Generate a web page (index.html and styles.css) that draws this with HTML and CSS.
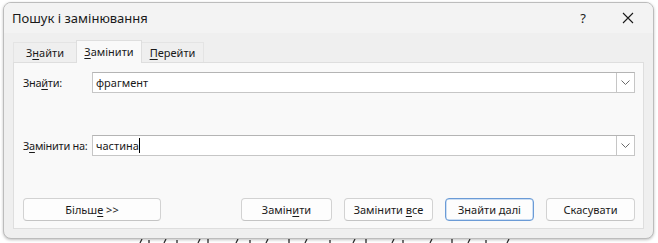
FILE: index.html
```html
<!DOCTYPE html>
<html lang="uk">
<head>
<meta charset="utf-8">
<link rel="stylesheet" href="styles.css">
</head>
<body>
<div class="dialog">
  <div class="titlebar">
    <span class="title">Пошук і замінювання</span>
    <span class="help">?</span>
    <span class="close">
      <svg width="12" height="12" viewBox="0 0 12 12"><path d="M1 1L11 11M11 1L1 11" stroke="#1a1a1a" stroke-width="1.1" fill="none"/></svg>
    </span>
  </div>
  <div class="content">
    <div class="tabs">
      <div class="tab tab-find"><span>З<u>н</u>айти</span></div>
      <div class="tab tab-active"><span><u>З</u>амінити</span></div>
      <div class="tab tab-goto"><span><u>П</u>ерейти</span></div>
    </div>
    <div class="panel">
      <div class="row">
        <label class="label">Зна<u>й</u>ти:</label>
        <div class="combo">
          <span class="value"><span>фрагмент</span></span>
          <span class="drop"><svg width="9" height="5" viewBox="0 0 9 5"><path d="M0.5 0.5L4.5 4.5L8.5 0.5" stroke="#6a6a6a" stroke-width="1" fill="none"/></svg></span>
        </div>
      </div>
      <div class="row row-replace">
        <label class="label">З<u>а</u>мінити на:</label>
        <div class="combo">
          <span class="value"><span>частина</span><span class="caret"></span></span>
          <span class="drop"><svg width="9" height="5" viewBox="0 0 9 5"><path d="M0.5 0.5L4.5 4.5L8.5 0.5" stroke="#6a6a6a" stroke-width="1" fill="none"/></svg></span>
        </div>
      </div>
      <div class="buttons">
        <button class="btn btn-more"><span>Більш<u>е</u> &gt;&gt;</span></button>
        <div class="btn-group">
          <button class="btn btn-w91"><span>Замін<u>и</u>ти</span></button>
          <button class="btn"><span>Замінити <u>в</u>се</span></button>
          <button class="btn btn-default"><span>Знайти далі</span></button>
          <button class="btn"><span>Скасувати</span></button>
        </div>
      </div>
    </div>
  </div>
</div>
<div class="behind">
  <svg width="380" height="5" viewBox="0 0 380 5">
    <g stroke="#2a2a2a" stroke-width="1.3" fill="none">
      <path d="M3 5L5 1"/><path d="M12 5L12 2"/><path d="M27 5L29 1"/><path d="M40 5L40 2"/>
      <path d="M61 5L63 1"/><path d="M71 5L71 1"/><path d="M99 5L101 1"/><path d="M113 5L113 2"/>
      <path d="M129 5L131 1"/><path d="M152 5L152 1"/><path d="M168 5L170 1"/><path d="M193 5L193 2"/>
      <path d="M216 5L218 1"/><path d="M229 5L229 1"/><path d="M255 5L257 1"/><path d="M266 5L266 2"/>
      <path d="M293 5L295 1"/><path d="M315 5L315 1"/><path d="M331 5L333 1"/><path d="M349 5L349 2"/>
      <path d="M370 5L372 1"/>
    </g>
  </svg>
</div>
</body>
</html>
```

FILE: styles.css
```css
* { box-sizing: border-box; }
html, body { margin: 0; padding: 0; background: #ffffff; }
body {
  font-family: "Noto Sans", "Open Sans", sans-serif;
  font-size: 11px;
  color: #1a1a1a;
  width: 658px;
  height: 243px;
  overflow: hidden;
}
u { text-decoration: underline; text-underline-offset: 2px; text-decoration-thickness: 1px; }

.dialog {
  margin: 2px 0 0 3px;
  width: 651px;
  height: 237px;
  border: 1px solid #bcbcbc;
  border-radius: 8px;
  background: #efefef;
  box-shadow: 0 1px 3px rgba(0,0,0,0.25);
  overflow: hidden;
  display: flex;
  flex-direction: column;
  position: relative;
  z-index: 1;
}

.titlebar {
  height: 30px;
  flex: none;
  background: #f3f3f3;
  display: flex;
  align-items: center;
  padding-left: 8px;
}
.title { font-size: 13px; color: #1a1a1a; flex: 1; margin-top: -1px; }
.help { font-size: 13px; width: 12px; text-align: center; margin-right: 33px; color: #1a1a1a; }
.close { width: 12px; height: 12px; display: flex; margin-right: 19px; }

.content {
  flex: 1;
  padding: 7px 9px 0 9px;
  display: flex;
  flex-direction: column;
}

.tabs {
  display: flex;
  align-items: flex-end;
  height: 22px;
  position: relative;
  z-index: 2;
}
.tab {
  height: 20px;
  border: 1px solid #e4e4e4;
  border-bottom: none;
  background: #efefef;
  display: flex;
  align-items: center;
  justify-content: center;
  font-size: 11px;
  color: #1a1a1a;
  white-space: nowrap;
}
.tab-find { width: 63px; border-right: none; }
.tab-active {
  width: 66px;
  height: 23px;
  background: #f9f9f9;
  margin-bottom: -1px;
  padding-bottom: 2px;
  border-color: #dedede;
}
.tab-goto { width: 62px; border-left: none; }

.panel {
  width: 631px;
  height: 167px;
  background: #f9f9f9;
  border: 1px solid #dedede;
  padding: 9px 8px 0 9px;
  display: flex;
  flex-direction: column;
}

.row {
  display: flex;
  align-items: center;
  height: 21px;
}
.row-replace { margin-top: 42px; }
.label { width: 69px; flex: none; white-space: nowrap; font-size: 11px; letter-spacing: -0.3px; color: #1a1a1a; }
.combo {
  flex: 1;
  height: 21px;
  background: #ffffff;
  border: 1px solid #c6c6c6;
  border-top-color: #b4b4b4;
  display: flex;
  align-items: center;
}
.value { flex: 1; padding-left: 3px; font-size: 11px; display: flex; align-items: center; white-space: nowrap; }
.caret { display: inline-block; width: 1px; height: 15px; background: #000; }
.drop {
  width: 18px;
  height: 100%;
  border-left: 1px solid #c6c6c6;
  display: flex;
  align-items: center;
  justify-content: center;
}

.buttons {
  display: flex;
  margin-top: 42px;
  height: 23px;
}
.btn {
  font-family: "Noto Sans", "Open Sans", sans-serif;
  font-size: 11px;
  color: #1a1a1a;
  height: 23px;
  width: 89px;
  background: #fdfdfd;
  border: 1px solid #d2d2d2;
  border-bottom-color: #c4c4c4;
  border-radius: 4px;
  padding: 0;
  display: flex;
  align-items: center;
  justify-content: center;
  white-space: nowrap;
}
.btn-more { width: 138px; }
.btn-group { margin-left: auto; display: flex; gap: 12px; }
.btn-w91 { width: 91px; }
.btn-default { border: 1px solid #6b9bd6; box-shadow: inset 0 0 0 0.5px #9cc0ea; }

.behind {
  margin: -1px 0 0 137px;
  height: 5px;
  display: flex;
}
```
